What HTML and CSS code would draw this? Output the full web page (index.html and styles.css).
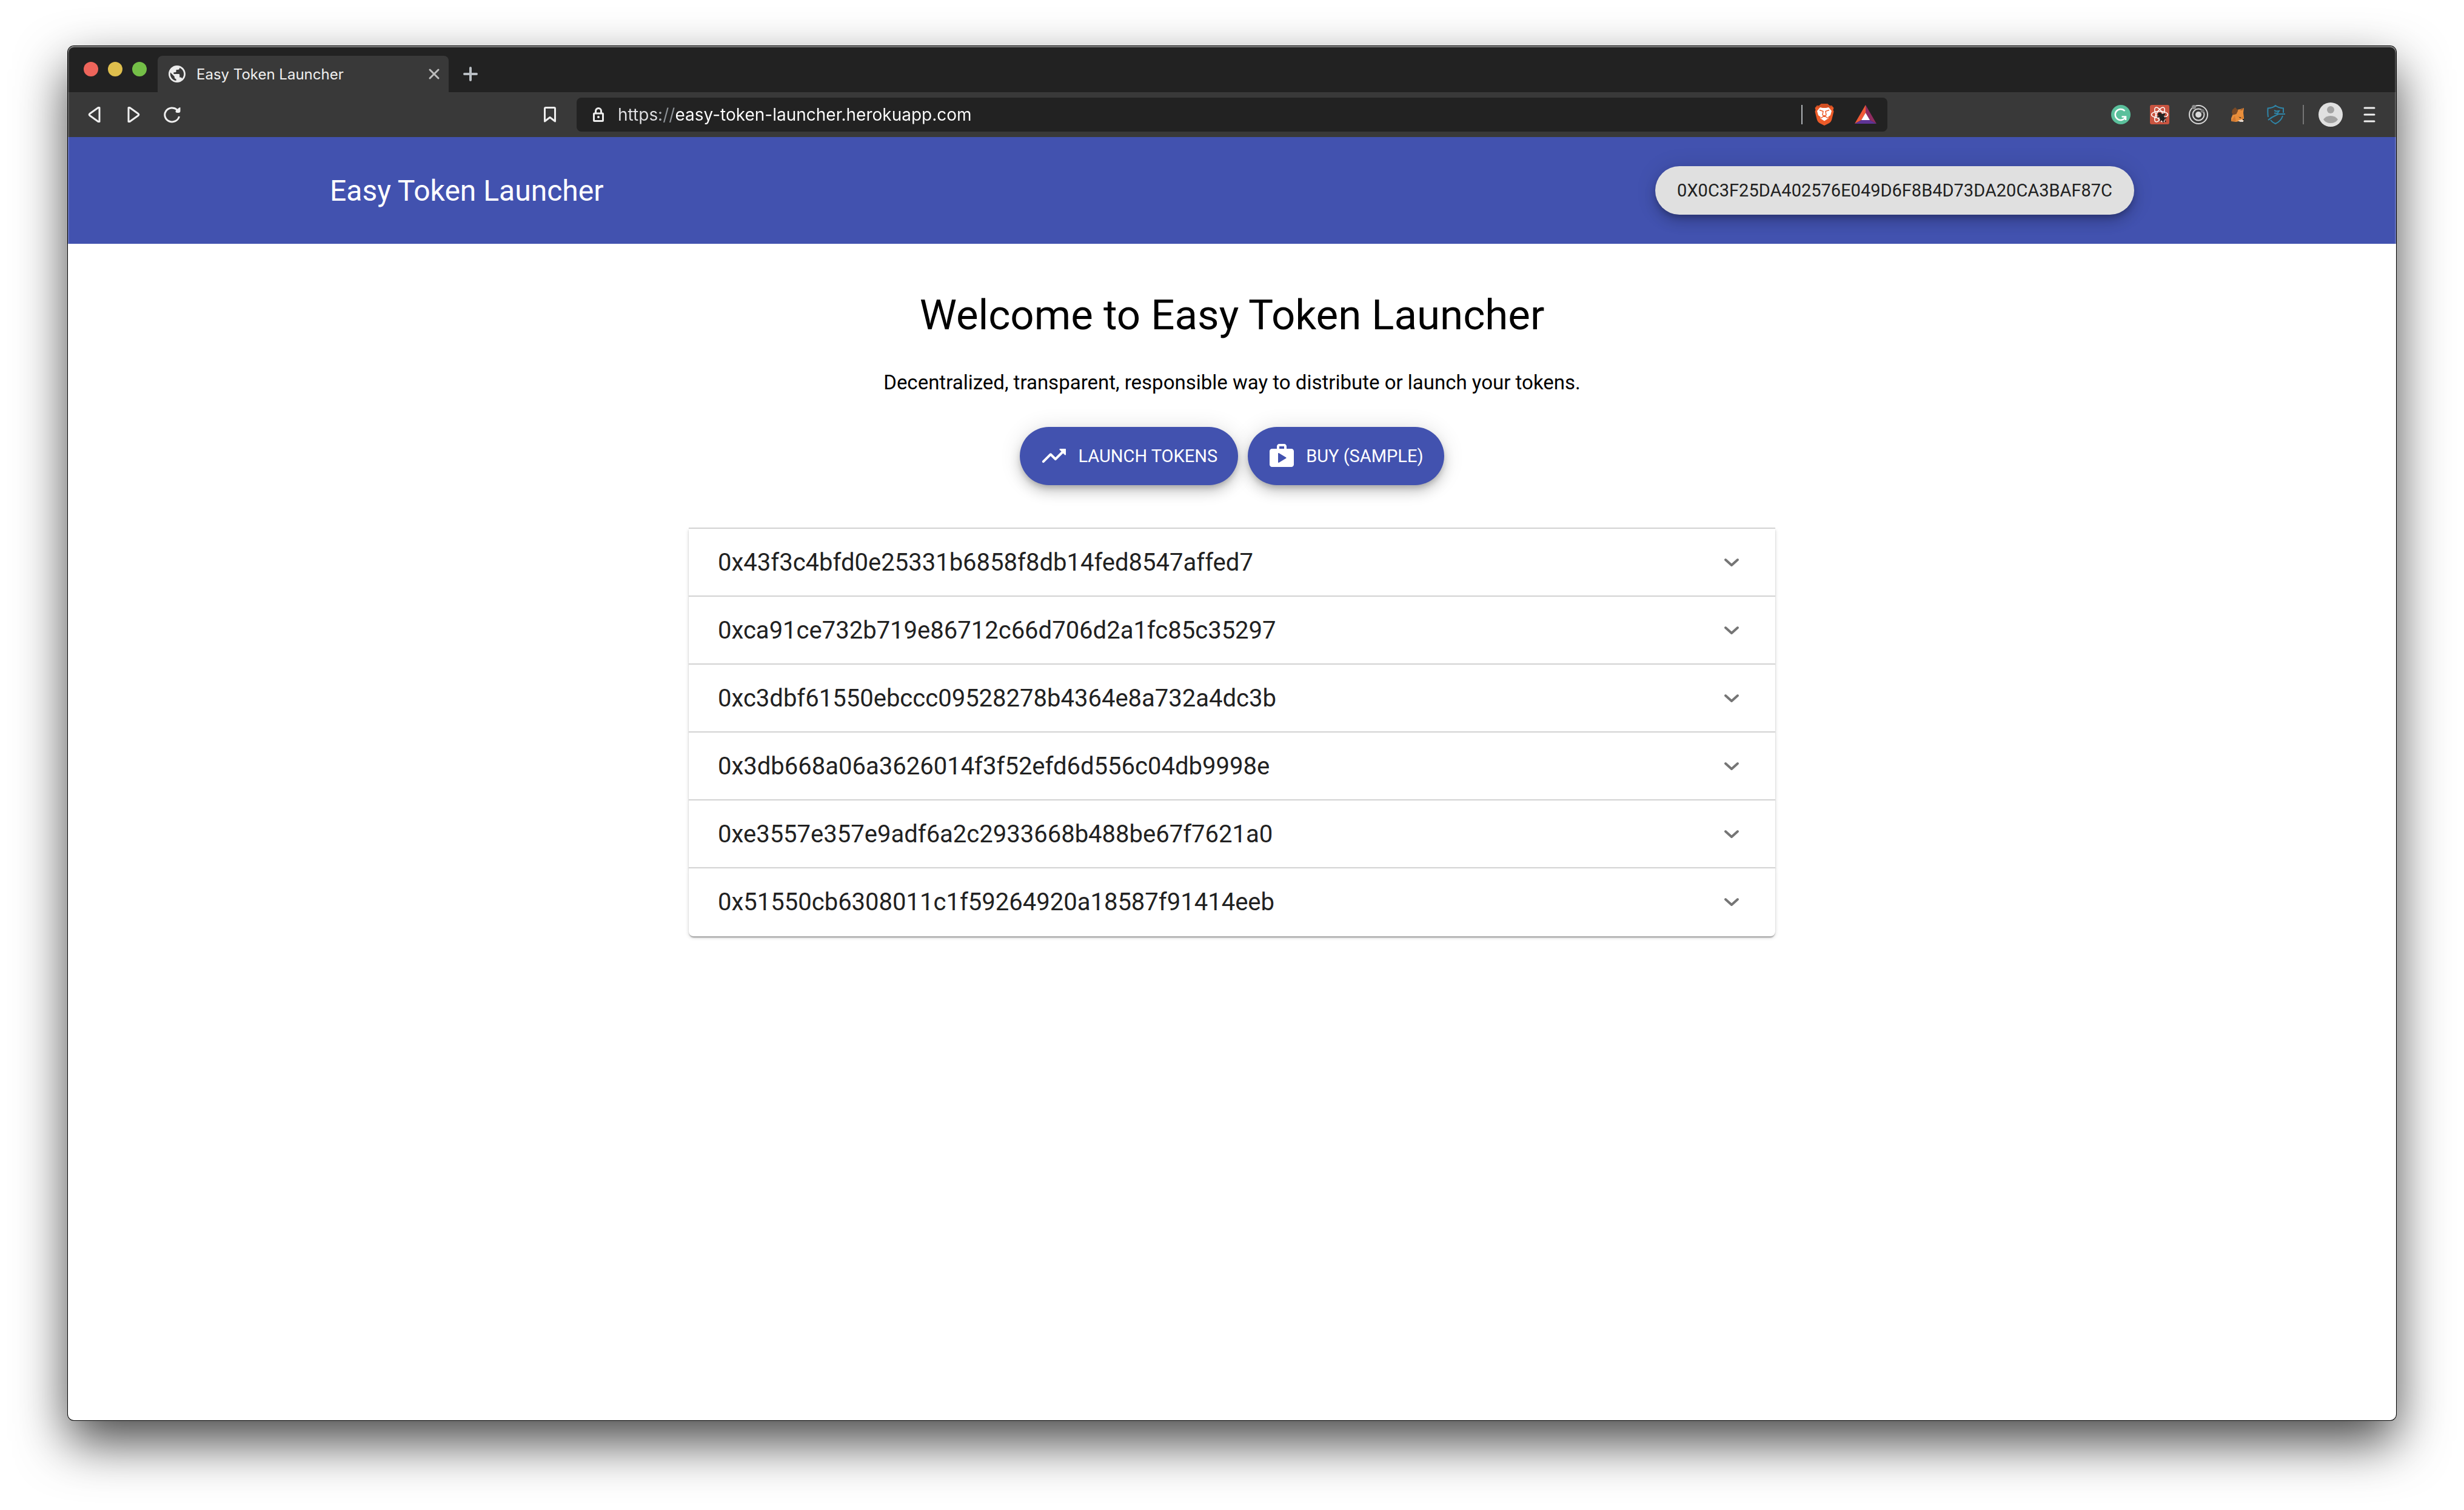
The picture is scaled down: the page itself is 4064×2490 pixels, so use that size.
FILE: index.html
```html
<!DOCTYPE html>
<html lang="en">
<head>
<meta charset="utf-8">
<meta name="viewport" content="width=device-width, initial-scale=1">
<title>Easy Token Launcher</title>
<link rel="stylesheet" href="styles.css">
</head>
<body>
<div class="window">
  <div class="titlebar">
    <div class="lights">
      <button class="light light-close" aria-label="Close window"></button>
      <button class="light light-minimize" aria-label="Minimize window"></button>
      <button class="light light-zoom" aria-label="Zoom window"></button>
    </div>
    <div class="tab">
      <svg class="tab-icon" viewBox="2 2 20 20" aria-hidden="true"><path fill="#ececec" d="M12 2C6.480 2 2 6.480 2 12s4.480 10 10 10 10-4.480 10-10S17.520 2 12 2zm-1 17.930c-3.950-.49-7-3.850-7-7.930 0-.62.08-1.210.21-1.790L9 15v1c0 1.100.9 2 2 2v1.930zm6.900-2.540c-.26-.81-1-1.390-1.900-1.390h-1v-3c0-.55-.45-1-1-1H8v-2h2c.55 0 1-.45 1-1V7h2c1.100 0 2-.9 2-2v-.41c2.930 1.190 5 4.060 5 7.410 0 2.080-.8 3.970-2.100 5.390z"/></svg>
      <span class="tab-title">Easy Token Launcher</span>
      <button class="tab-close" aria-label="Close tab"><svg viewBox="0 0 24 24" width="24" height="24"><path d="M5 5l14 14M19 5L5 19" stroke="#bdbdbd" stroke-width="3" stroke-linecap="round"/></svg></button>
    </div>
    <button class="tab-new" aria-label="New tab"><svg viewBox="0 0 24 24" width="24" height="24"><path d="M12 2v20M2 12h20" stroke="#b9bec3" stroke-width="4" stroke-linecap="round"/></svg></button>
  </div>

  <div class="toolbar">
    <div class="toolbar-side">
      <div class="tools">
        <button class="tool" aria-label="Back"><svg viewBox="0 0 28 28" width="28" height="28"><path d="M22 2.500v23h-2L6 15.500q-1.500-1.500 0-3L20 2.500z" class="line"/></svg></button>
        <button class="tool" aria-label="Forward"><svg viewBox="0 0 28 28" width="28" height="28"><path d="M6 2.500v23h2l14-10q1.500-1.500 0-3L8 2.500z" class="line"/></svg></button>
        <button class="tool" aria-label="Reload"><svg viewBox="0 0 28 28" width="28" height="28"><path d="M25.500 17A12 11.500 0 1 1 22 6" class="line"/><path d="M27.500 2.500v5.500q0 3-3 3h-2q-3 0-3-2.500 0-2 3-3.500l3-2.500q2-1 2 0z" fill="#efefef"/></svg></button>
      </div>
      <button class="tool" aria-label="Bookmark this page"><svg viewBox="0 0 28 28" width="28" height="28"><path d="M5.500 25V4q0-1.500 1.500-1.500h14q1.500 0 1.500 1.500v21L14 18.500z" class="line"/></svg></button>
    </div>

    <div class="address">
      <svg viewBox="0 0 24 28" width="24" height="28" aria-hidden="true"><rect x="4.500" y="12" width="15" height="12.500" rx="1" fill="none" stroke="#ececec" stroke-width="3"/><path d="M7.500 12V8a4.500 4.500 0 0 1 9 0v4" fill="none" stroke="#ececec" stroke-width="3"/><circle cx="12" cy="18" r="2" fill="#ececec"/></svg>
      <input class="address-input" type="text" aria-label="Address" value="https://easy-token-launcher.herokuapp.com" spellcheck="false">
      <span class="address-divider"></span>
      <button class="shield" aria-label="Brave Shields"><svg viewBox="0 0 32 36" width="32" height="36"><path d="M11 0h10l4 3.500 3-.5 3.500 4-1 3 1 3-3.500 14q-1 3-4 5l-8 4-8-4q-3-2-4-5L.5 13l1-3-1-3L4 3l3 .5z" fill="#ec5b29"/><path d="M11 0h10l4 3.500 3-.5 2 2.500-4 1H6l-4-1L4 3l3 .5z" fill="#d14f22"/><path d="M4 12l5-6 4 1h6l4-1 5 6-2 7-4 3 1 2-7 4.500L9 24l1-2-4-3z" fill="#fff"/><path d="M8 10.500l6 2-1 6 3 2.500 3-2.500-1-6 6-2M10 24l6-4 6 4" fill="none" stroke="#ec5b29" stroke-width="1.500"/></svg></button>
      <button class="shield" aria-label="Brave Rewards"><svg viewBox="0 0 36 32" width="36" height="32"><path d="M18 0v13l-7 12L0 31z" fill="#f15a36"/><path d="M18 0l18 31-11-6-7-12z" fill="#902c61"/><path d="M0 31l11-6h14l11 6z" fill="#5f3496"/><path d="M18 13l7 12H11z" fill="#fff"/></svg></button>
    </div>

    <div class="toolbar-side toolbar-end">
      <div class="tools">
        <button class="tool" aria-label="Grammarly"><svg viewBox="0 0 32 32" width="32" height="32"><circle cx="16" cy="16" r="16" fill="#5bc09c"/><path d="M22.500 10A9 9 0 1 0 24 19.500M17.500 19.500h6.500V25" fill="none" stroke="#fff" stroke-width="2.500"/></svg></button>
        <button class="tool" aria-label="React Developer Tools"><svg viewBox="0 0 32 32" width="32" height="32"><rect width="32" height="32" rx="3" fill="#c95440"/><g fill="none" stroke="#fff" stroke-width="1.500"><ellipse cx="16" cy="16" rx="13.500" ry="5.500"/><ellipse cx="16" cy="16" rx="13.500" ry="5.500" transform="rotate(60 16 16)"/><ellipse cx="16" cy="16" rx="13.500" ry="5.500" transform="rotate(120 16 16)"/></g><ellipse cx="20" cy="21" rx="4" ry="6" transform="rotate(-35 20 21)" fill="#222"/><circle cx="16" cy="15.500" r="3" fill="#222"/><path d="M12 20l5-1M17 27l1-5M19 16l6-1M23 18v-4M24 22l3-1M21 25l1 4M25 26l1 2" stroke="#222" stroke-width="2"/></svg></button>
        <button class="tool" aria-label="Orbit"><svg viewBox="0 0 32 32" width="32" height="32"><g fill="none" stroke="#d9d9d9" stroke-width="2"><circle cx="16" cy="16" r="15"/><circle cx="16" cy="16" r="9.500"/></g><circle cx="16" cy="16" r="5" fill="#d9d9d9"/><circle cx="8.500" cy="3.500" r="3.500" fill="#8c8c8c"/><circle cx="22.500" cy="10" r="3" fill="#777"/></svg></button>
        <button class="tool" aria-label="MetaMask"><svg viewBox="0 0 32 32" width="32" height="32"><path d="M9 15l7-7 5-1 6-2-1 8 1 8v4l-2 3-7-1-4 1-8-1v-5z" fill="#ea8f3b"/><path d="M6 27l6-9 2 9z" fill="#d47a31"/><path d="M12.500 4l5 5-3 6-5 1.500L7 13l1-5z" fill="#7a4a26"/><path d="M27 5l-3 4-4-.5z" fill="#a8602b"/><path d="M16 18l6 2 4-1-1 4-5-1z" fill="#d9802f"/><path d="M19 20l3 .5v1.500l-2-.5z" fill="#333"/><path d="M17 26l6-2 3 1v3h-5z" fill="#e3d6cb"/><path d="M25 23h2v2h-2z" fill="#222"/></svg></button>
        <button class="tool" aria-label="Shield"><svg viewBox="0 0 32 32" width="32" height="32"><path d="M3 20Q2 14 2.500 5.500 11 5 15 1q5 4 13 4.500V13M27 18q-3 9-12 13Q10 29 7 25M3 25q6-5 13-8l4-2h11M13 9l3 1.500 5-.5-3 4-5-.5" fill="none" stroke="#2f86a9" stroke-width="2"/></svg></button>
      </div>
      <span class="toolbar-divider"></span>
      <div class="tools">
        <button class="tool" aria-label="Profile"><svg viewBox="0 0 40 40" width="40" height="40"><circle cx="20" cy="20" r="20" fill="#e0e0e0"/><circle cx="20" cy="12" r="6" fill="#a2a2a2"/><path d="M8 28q4-6 12-6t12 6q-4 6-12 6T8 28z" fill="#a2a2a2"/></svg></button>
        <button class="tool" aria-label="Menu"><svg viewBox="0 0 28 28" width="28" height="28"><path d="M6 3h16M6 14h16M6 25h16" stroke="#efefef" stroke-width="3" stroke-linecap="round"/></svg></button>
      </div>
    </div>
  </div>

  <header class="appbar">
    <a class="brand" href="#">Easy Token Launcher</a>
    <button class="fab fab-account">0X0C3F25DA402576E049D6F8B4D73DA20CA3BAF87C</button>
  </header>

  <main class="content">
    <h1 class="heading">Welcome to Easy Token Launcher</h1>
    <p class="intro">Decentralized, transparent, responsible way to distribute or launch your tokens.</p>
    <div class="actions">
      <button class="fab fab-primary"><svg viewBox="0 0 24 24" width="48" height="48" aria-hidden="true"><path d="M16.850 6.850l1.440 1.440-4.880 4.880-3.290-3.290c-.39-.39-1.020-.39-1.410 0l-6 6.010c-.39.39-.39 1.020 0 1.410.39.39 1.020.39 1.410 0L9.410 12l3.290 3.290c.39.39 1.020.39 1.410 0l5.590-5.580 1.440 1.440c.31.31.85.09.85-.35V6.500c.01-.28-.21-.5-.49-.5h-4.290c-.45 0-.67.54-.36.85z"/></svg>LAUNCH TOKENS</button>
      <button class="fab fab-primary"><svg viewBox="0 0 24 24" width="48" height="48" aria-hidden="true"><path d="M16 6V4c0-1.110-.89-2-2-2h-4c-1.110 0-2 .89-2 2v2H4c-1.110 0-2 .89-2 2v11c0 1.110.89 2 2 2h16c1.110 0 2-.89 2-2V8c0-1.110-.89-2-2-2h-4zm-6-2h4v2h-4V4zM9 16.960V10.040c0-.4.440-.65.780-.43l5.770 3.470c.32.2.32.66 0 .85l-5.770 3.470c-.34.2-.78-.04-.78-.44z"/></svg>BUY (SAMPLE)</button>
    </div>
    <ul class="accordion">
      <li class="panel"><button class="summary" aria-expanded="false">0x43f3c4bfd0e25331b6858f8db14fed8547affed7<svg class="chevron" viewBox="0 0 24 24" width="48" height="48"><path d="M7 9.500l5 4.500 5-4.500"/></svg></button></li>
      <li class="panel"><button class="summary" aria-expanded="false">0xca91ce732b719e86712c66d706d2a1fc85c35297<svg class="chevron" viewBox="0 0 24 24" width="48" height="48"><path d="M7 9.500l5 4.500 5-4.500"/></svg></button></li>
      <li class="panel"><button class="summary" aria-expanded="false">0xc3dbf61550ebccc09528278b4364e8a732a4dc3b<svg class="chevron" viewBox="0 0 24 24" width="48" height="48"><path d="M7 9.500l5 4.500 5-4.500"/></svg></button></li>
      <li class="panel"><button class="summary" aria-expanded="false">0x3db668a06a3626014f3f52efd6d556c04db9998e<svg class="chevron" viewBox="0 0 24 24" width="48" height="48"><path d="M7 9.500l5 4.500 5-4.500"/></svg></button></li>
      <li class="panel"><button class="summary" aria-expanded="false">0xe3557e357e9adf6a2c2933668b488be67f7621a0<svg class="chevron" viewBox="0 0 24 24" width="48" height="48"><path d="M7 9.500l5 4.500 5-4.500"/></svg></button></li>
      <li class="panel"><button class="summary" aria-expanded="false">0x51550cb6308011c1f59264920a18587f91414eeb<svg class="chevron" viewBox="0 0 24 24" width="48" height="48"><path d="M7 9.500l5 4.500 5-4.500"/></svg></button></li>
    </ul>
  </main>
</div>
</body>
</html>
```
FILE: styles.css
```css
* {
  box-sizing: border-box;
}

body {
  display: flex;
  min-height: 100vh;
  margin: 0;
  padding: 76px 112px 148px;
  background: #fff;
  font-family: Roboto, "Liberation Sans", sans-serif;
}

button {
  display: flex;
  align-items: center;
  justify-content: center;
  margin: 0;
  padding: 0;
  border: 0;
  background: none;
  font: inherit;
  color: inherit;
}

svg {
  display: block;
  flex: none;
}

/* Browser window */

.window {
  position: relative;
  display: flex;
  flex: 1;
  flex-direction: column;
  min-width: 0;
  border-radius: 10px;
  background: #fff;
  box-shadow: 0 0 0 1px #000, 0 36px 84px rgba(0, 0, 0, .72);
}

/* Light rim along the window's edge */
.window::after {
  content: "";
  position: absolute;
  inset: 0;
  border-radius: 10px;
  box-shadow: inset 0 2px 0 rgba(255, 255, 255, .3), inset 0 0 0 2px rgba(255, 255, 255, .2);
  pointer-events: none;
}

.titlebar {
  display: flex;
  align-items: flex-end;
  height: 76px;
  padding-left: 26px;
  border-radius: 10px 10px 0 0;
  background: #222;
  font-family: Inter, "Liberation Sans", sans-serif;
}

.lights {
  display: flex;
  align-self: center;
  gap: 16px;
  margin-right: 18px;
}

.light {
  width: 24px;
  height: 24px;
  border-radius: 50%;
}

.light-close { background: #ee655b; }
.light-minimize { background: #dfbf4d; }
.light-zoom { background: #74bf47; }

.tab {
  display: flex;
  align-items: center;
  gap: 18px;
  width: 480px;
  height: 60px;
  padding: 0 12px 0 18px;
  border-radius: 8px 8px 0 0;
  background: #393939;
  color: #efefef;
  font-size: 24px;
}

.tab-icon {
  width: 28px;
  height: 28px;
}

.tab-title {
  flex: 1;
  white-space: nowrap;
}

.tab-new {
  width: 48px;
  height: 60px;
  margin-left: 12px;
}

.toolbar {
  display: grid;
  grid-template-columns: 1fr 56.3% 1fr;
  align-items: center;
  height: 74px;
  background: #393939;
}

.toolbar-side {
  display: flex;
  align-items: center;
  justify-content: space-between;
  padding: 0 12px;
}

.toolbar-end {
  justify-content: flex-end;
}

.tools {
  display: flex;
}

.tool {
  width: 64px;
  height: 64px;
}

.line {
  fill: none;
  stroke: #efefef;
  stroke-width: 3;
  stroke-linejoin: round;
}

.toolbar-divider {
  width: 2px;
  height: 32px;
  margin: 0 12px;
  background: #757575;
}

.address {
  display: flex;
  align-items: center;
  height: 56px;
  padding: 0 2px 0 24px;
  border-radius: 8px;
  background: #222;
}

.address-input {
  flex: 1;
  min-width: 0;
  height: 40px;
  margin-left: 20px;
  padding: 0;
  border: 0;
  /* Scheme, separator and host each take their own tint */
  background: linear-gradient(90deg, #e0e0e3 0 70px, #8d9297 70px 96px, #fff 96px);
  background-clip: text;
  -webkit-background-clip: text;
  color: transparent;
  font: 28px Inter, "Liberation Sans", sans-serif;
}

.address-divider {
  width: 2px;
  height: 32px;
  margin-right: 2px;
  background: #aeb2b6;
}

.shield {
  width: 68px;
  height: 56px;
}

/* Application */

.appbar {
  display: flex;
  align-items: center;
  justify-content: space-between;
  height: 176px;
  padding: 0 11.25%;
  background: #4252af;
}

.brand {
  color: #fff;
  font-size: 48px;
  text-decoration: none;
}

.fab {
  border-radius: 48px;
  box-shadow: 0 6px 10px -2px rgba(0, 0, 0, .2), 0 12px 20px rgba(0, 0, 0, .14), 0 2px 36px rgba(0, 0, 0, .12);
  font-size: 29px;
  white-space: nowrap;
}

.fab-account {
  height: 80px;
  padding: 0 36px;
  background: #e0e0e0;
  color: #212121;
}

.fab-primary {
  gap: 16px;
  height: 96px;
  padding: 0 34px 0 32px;
  background: #4252af;
  color: #fff;
  fill: #fff;
}

.content {
  display: flex;
  flex-direction: column;
  align-items: center;
  padding: 76px 48px;
  color: #000;
}

.heading {
  margin: 0 0 45px;
  font-size: 69px;
  font-weight: 400;
  line-height: 84px;
  text-align: center;
}

.intro {
  margin: 0 0 49px;
  font-size: 33px;
  line-height: 48px;
  text-align: center;
}

.actions {
  display: flex;
  gap: 16px;
  margin-bottom: 72px;
}

.accordion {
  width: 100%;
  max-width: 1792px;
  margin: 0;
  padding: 0;
  list-style: none;
}

/* Each panel draws its own rule just above itself */
.panel {
  background: #fff;
  box-shadow: 0 -2px 0 #d3d3d3, 0 4px 2px -2px rgba(0, 0, 0, .2), 0 2px 2px rgba(0, 0, 0, .14), 0 2px 6px rgba(0, 0, 0, .16);
}

.panel:last-child {
  border-radius: 0 0 8px 8px;
}

.summary {
  justify-content: space-between;
  width: 100%;
  padding: 32px 48px;
  color: #212121;
  font-size: 40px;
  line-height: 48px;
}

.chevron {
  fill: none;
  stroke: #757575;
  stroke-width: 2;
  stroke-linecap: round;
  stroke-linejoin: round;
}
```
